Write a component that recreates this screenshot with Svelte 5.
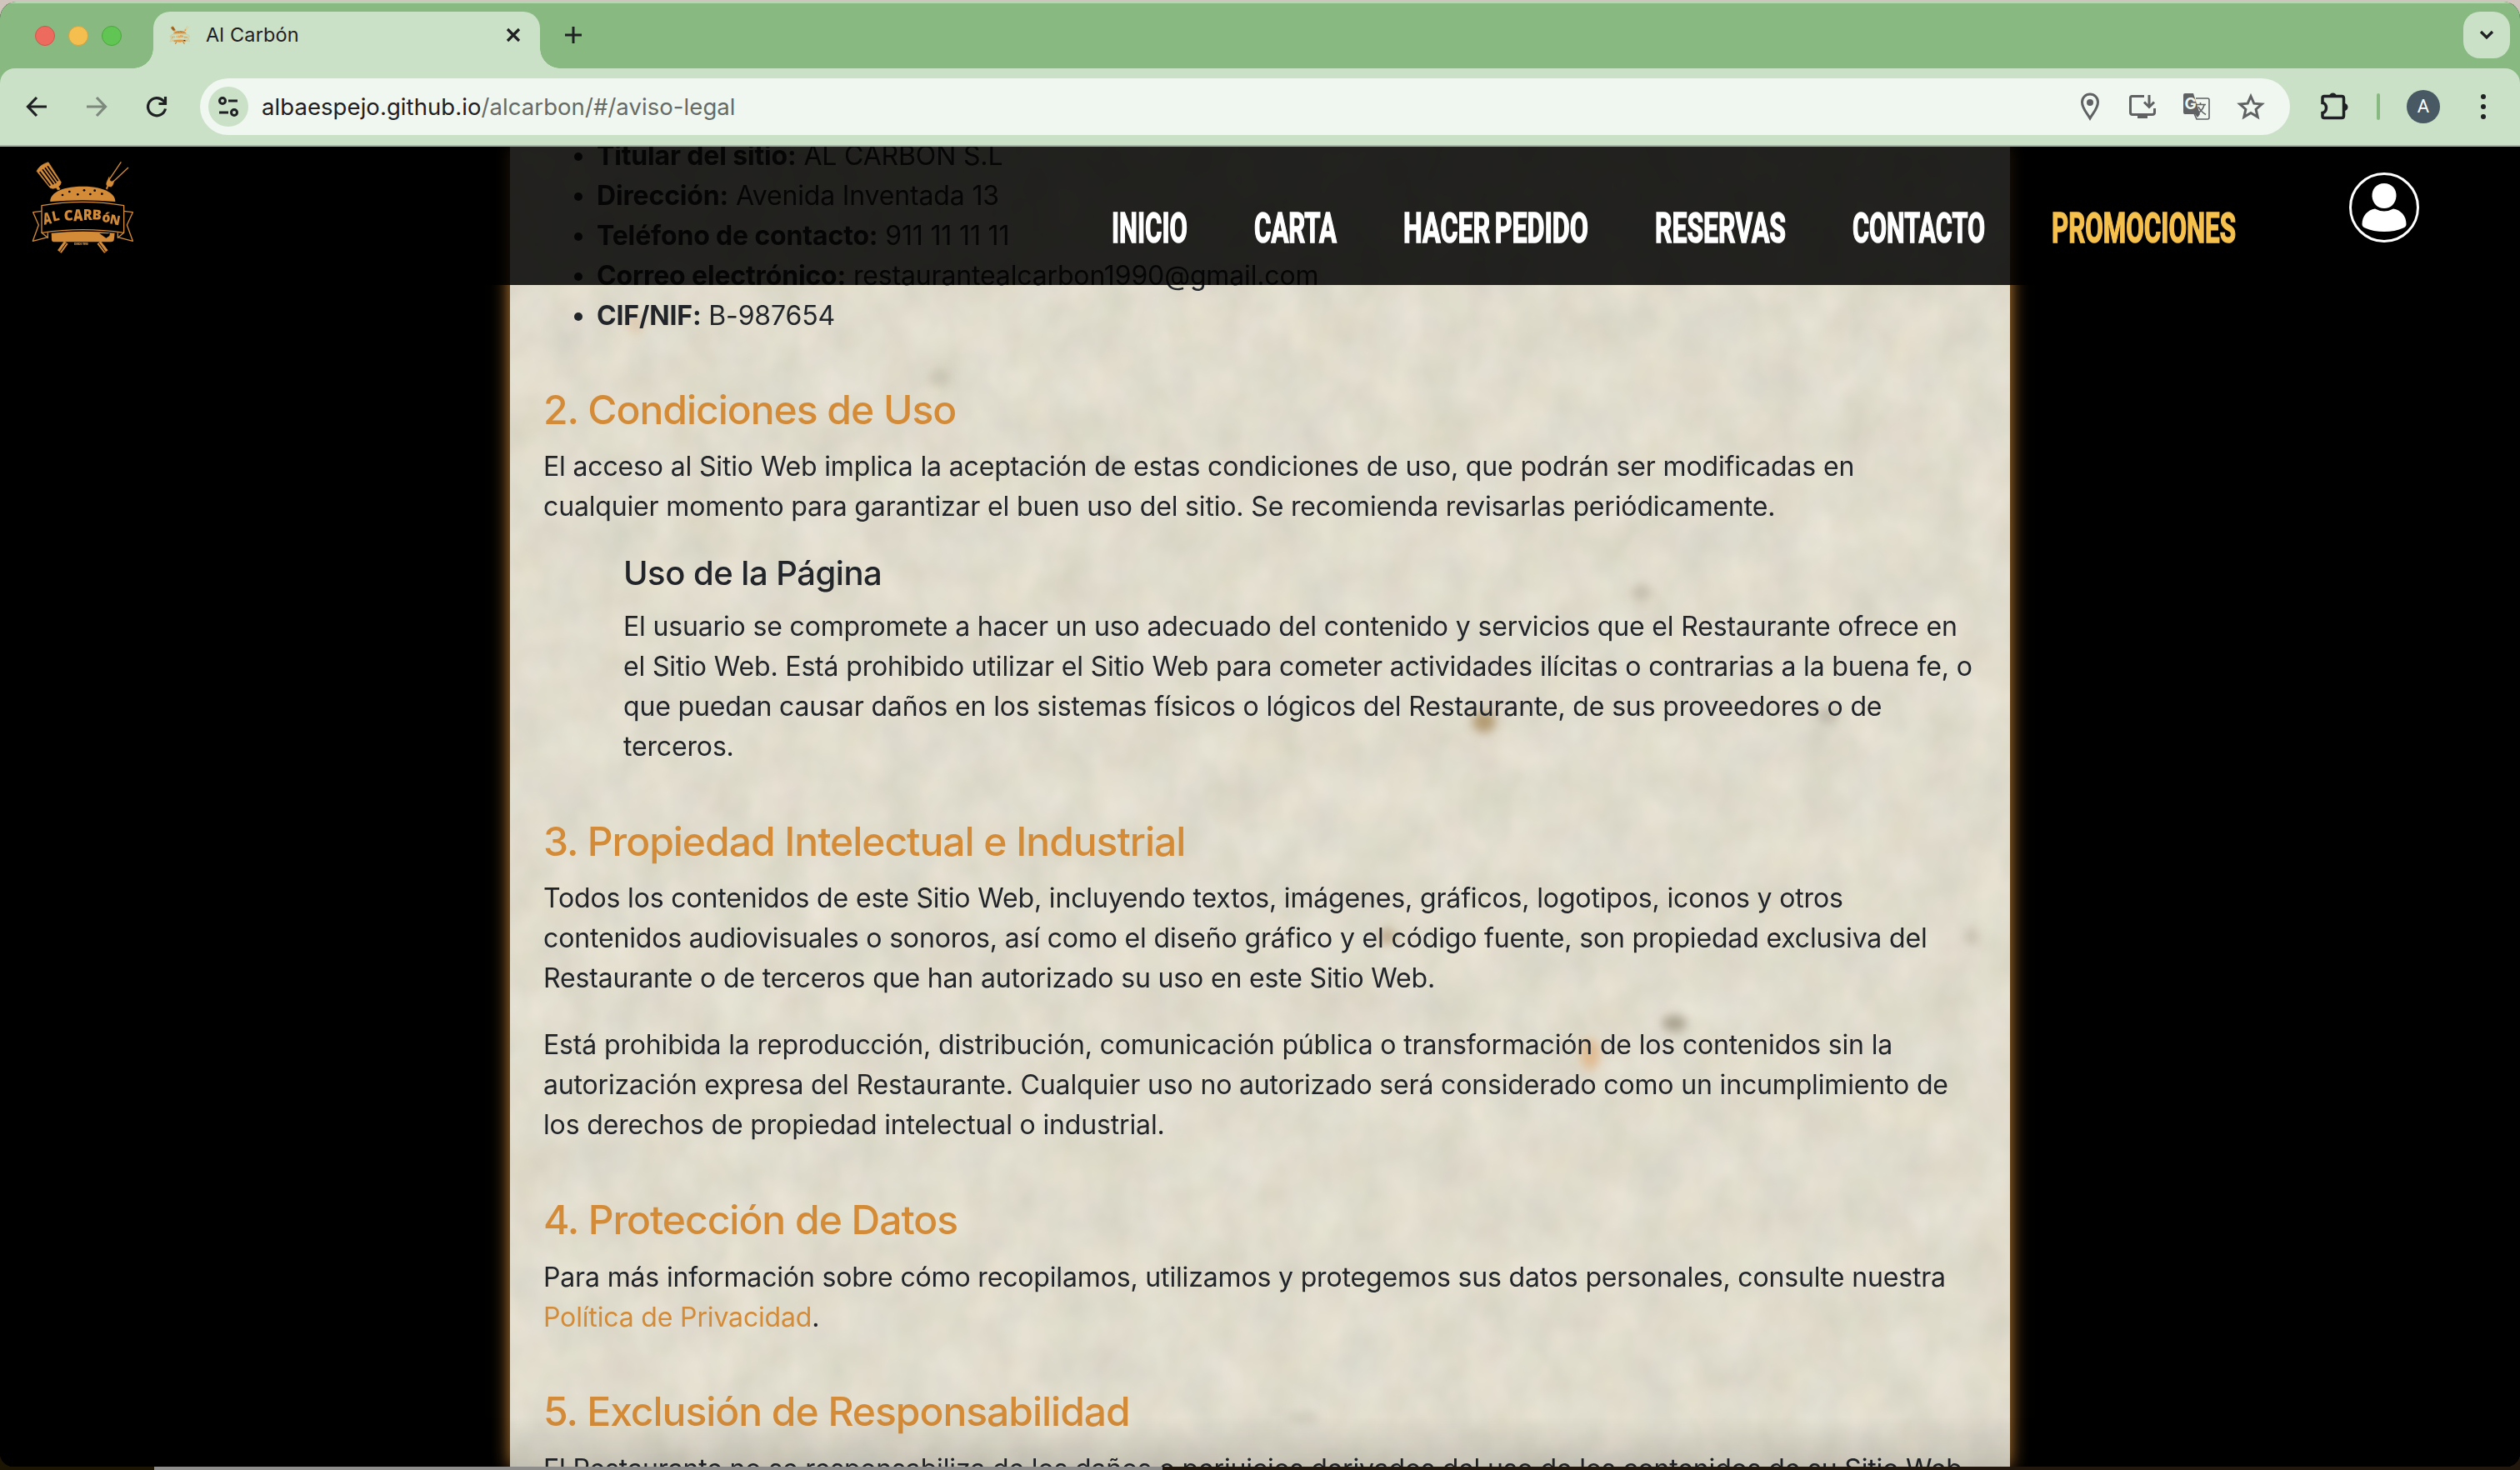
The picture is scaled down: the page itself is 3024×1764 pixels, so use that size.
<script>
  const nav = [
    { label: 'INICIO', w: 91 },
    { label: 'CARTA', w: 99 },
    { label: 'HACER PEDIDO', w: 222 },
    { label: 'RESERVAS', w: 157 },
    { label: 'CONTACTO', w: 159 },
    { label: 'PROMOCIONES', w: 221, accent: true }
  ];
  const owner = [
    ['Titular del sitio:', 'AL CARBÓN S.L'],
    ['Dirección:', 'Avenida Inventada 13'],
    ['Teléfono de contacto:', '911 11 11 11'],
    ['Correo electrónico:', 'restaurantealcarbon1990@gmail.com'],
    ['CIF/NIF:', 'B-987654']
  ];
</script>

{#snippet logo()}
  <svg class="logo" viewBox="0 0 480 390">
    <g fill="#d38b38" stroke="#d38b38" stroke-linejoin="round">
      <path d="M72 64 Q84 40 114 32 L160 104 Q158 116 150 119 L156 129 L148 132 L142 124 Q130 130 120 124 Z" stroke-width="2" />
      <path d="M83 66 L121 116 M93 58 L133 112 M102 52 L142 107 M111 46 L149 100" stroke="#000" stroke-width="5" />
      <path d="M376 31 L331 98 L342 107 L402 51" fill="none" stroke-width="4" />
      <path d="M333 84 Q334 108 350 98 Q350 114 340 121 L330 119 L326 130 L321 127 L326 117 Q320 112 325 101 Z" stroke-width="1" />
      <path d="M121 174 C119 149 151 119 239 119 C323 119 358 150 355 174 Q238 164 121 174 Z" stroke="none" />
      <g fill="#000" stroke="none">
        <circle cx="165" cy="150" r="4" /><circle cx="190" cy="138" r="4" /><circle cx="220" cy="148" r="4" /><circle cx="243" cy="133" r="4" />
        <circle cx="265" cy="147" r="4" /><circle cx="281" cy="134" r="4" /><circle cx="307" cy="146" r="4" />
      </g>
      <g fill="none" stroke-width="4">
        <path d="M90 188 Q239 162 386 188 V286 Q239 264 90 286 Z" />
        <path d="M90 208 L59 212 L79 258 L58 316 L112 302 M386 208 L418 212 L397 258 L418 316 L364 302" />
        <path d="M90 286 L112 304 V286 M386 286 L364 304 V286" />
      </g>
      <path d="M125 287 Q240 275 353 287 L350 313 Q348 319 340 319 H136 Q127 319 126 312 Z" stroke="none" />
      <path d="M298 288 L328 289 L336 287 L334 297 L322 305 Z" fill="#000" stroke="none" />
      <path d="M178 321 L154 354 M296 321 L322 354" fill="none" stroke-width="17" stroke-linejoin="miter" />
      <path d="M178 324 L156 354 M297 324 L319 354" fill="none" stroke="#000" stroke-width="3" />
    </g>
    <g class="brush">
      <text transform="translate(99 257) rotate(-10)" font-size="58" textLength="29" lengthAdjust="spacingAndGlyphs">A</text>
      <text transform="translate(131 245) rotate(-12)" font-size="50" textLength="26" lengthAdjust="spacingAndGlyphs">L</text>
      <text transform="translate(171 242) rotate(-3)" font-size="51" textLength="33" lengthAdjust="spacingAndGlyphs">C</text>
      <text transform="translate(205 244) rotate(-2)" font-size="58" textLength="34" lengthAdjust="spacingAndGlyphs">A</text>
      <text transform="translate(239 241)" font-size="52" textLength="33" lengthAdjust="spacingAndGlyphs">R</text>
      <text transform="translate(271 238) rotate(3)" font-size="50" textLength="34" lengthAdjust="spacingAndGlyphs">B</text>
      <text transform="translate(306 246) rotate(6)" font-size="48" textLength="30" lengthAdjust="spacingAndGlyphs">ó</text>
      <text transform="translate(333 252) rotate(11)" font-size="47" textLength="37" lengthAdjust="spacingAndGlyphs">N</text>
      <text x="207" y="330" font-size="10" textLength="50">DESDE 1990</text>
    </g>
  </svg>
{/snippet}

<div class="window">
  <header class="chrome">
    <div class="tabstrip">
      <div class="lights"><i class="red"></i><i class="yellow"></i><i class="green"></i></div>
      <div class="tab">
        <span class="favicon">{@render logo()}</span>
        <span class="tab-title">Al Carbón</span>
        <svg class="close" width="20" height="20" viewBox="0 0 20 20"><path d="M3 3 17 17M17 3 3 17" /></svg>
      </div>
      <svg class="plus" width="22" height="22" viewBox="0 0 22 22"><path d="M11 1V21M1 11H21" /></svg>
      <span class="drop"><svg width="20" height="14" viewBox="0 0 20 14"><path d="M3 3 10 10 17 3" /></svg></span>
    </div>
    <div class="toolbar">
      <div class="moves">
        <svg width="28" height="28" viewBox="0 0 28 28"><path d="M26 14H4M14 3 3.500 14 14 25" /></svg>
        <svg class="off" width="28" height="28" viewBox="0 0 28 28"><path d="M2 14H24M14 3 24.500 14 14 25" /></svg>
        <svg width="28" height="28" viewBox="0 0 28 28"><path d="M24.500 16.500A10.600 10.600 0 1 1 22 7L25 10M24.500 2V10.500H16.500" /></svg>
      </div>
      <div class="omnibox">
        <span class="site">
          <svg width="28" height="28" viewBox="0 0 28 28"><circle cx="7" cy="7" r="3.500" /><path d="M14 7H25M3 21H14" /><circle cx="21" cy="21" r="3.500" /></svg>
        </span>
        <span class="url">albaespejo.github.io<em>/alcarbon/#/aviso-legal</em></span>
        <div class="actions">
          <svg width="32" height="36" viewBox="0 0 32 36"><path d="M16 32C12 25 6.500 20 6.500 12.500a9.500 9.500 0 0 1 19 0C25.500 20 20 25 16 32Z" fill="none" stroke-width="3" /><circle cx="16" cy="13" r="4" stroke="none" /></svg>
          <svg width="36" height="36" viewBox="0 0 36 36"><path d="M20 5.500H5.500Q3.500 5.500 3.500 7.500V25Q3.500 27.500 6 27.500H29.500Q32.500 27.500 32.500 25V20" fill="none" stroke-width="3" /><path d="M12 28H24V32H12Z" stroke="none" /><path d="M26 4V17M20 12.500 26 18.500 32 12.500" fill="none" stroke-width="3" /></svg>
          <svg width="36" height="36" viewBox="0 0 36 36"><path d="M17 8H31Q33 8 33 10V31Q33 33 31 33H18L14 24" fill="none" stroke-width="1.600" /><path d="M4 2H14L22 27L19 31L16 27H4Q2 27 2 25V4Q2 2 4 2Z" stroke="none" /><text x="3.500" y="20.500" class="gee">G</text><path d="M17 15.500H29M22.500 13V15.500M27 16Q25 23 18 27M20 18Q23 24 29 27.500" fill="none" stroke-width="1.600" /></svg>
          <svg width="36" height="36" viewBox="0 0 36 36"><path d="M18 5.500 21.800 14.200 31.200 15 24.100 21.200 26.200 30.400 18 25.500 9.800 30.400 11.900 21.200 4.800 15 14.200 14.200Z" fill="none" stroke-width="3" stroke-linejoin="miter" /></svg>
        </div>
      </div>
      <svg class="ext" width="40" height="40" viewBox="0 0 40 40"><path d="M6 9.500Q6 7.500 8 7.500H29Q31.500 7.500 31.500 10V31Q31.500 33.500 29 33.500H8Q6 33.500 6 31.500V27.500C12 26.500 12 16 6 15.500Z" fill="none" stroke-width="3.500" /><path d="M14 8a4.500 4.500 0 0 1 9 0ZM32 16a4.500 4.500 0 0 1 0 9Z" stroke="none" /></svg>
      <i class="sep"></i>
      <span class="avatar">A</span>
      <span class="dots"><i></i><i></i><i></i></span>
    </div>
  </header>

  <main class="view">
    <header class="site-header">
      <div class="brand">{@render logo()}</div>
      <nav>
        {#each nav as item}
          <svg class:accent={item.accent} width={item.w} height="60" viewBox={`0 0 ${item.w} 60`}>
            <text x="0" y="45.500" textLength={item.w} lengthAdjust="spacingAndGlyphs">{item.label}</text>
          </svg>
        {/each}
      </nav>
      <svg class="user" width="84" height="84" viewBox="0 0 84 84">
        <circle cx="42" cy="42" r="40.500" fill="none" stroke="#fff" stroke-width="3" />
        <path d="M42 13C51 13 57 20 56.500 28.500C56 37 50 43 42 43S28 37 27.500 28.500C27 20 33 13 42 13Z" />
        <path d="M31 43.500Q42 49.500 53 43.500C62 45 68.500 52 68.500 62Q68.500 65 65 66.500Q55 71 42 71T19 66.500Q15.500 65 15.500 62C15.500 52 22 45 31 43.500Z" />
      </svg>
    </header>

    <article class="paper">
      <svg class="grain" width="1800" height="1584">
        <filter id="fibre" x="0" y="0" width="100%" height="100%" color-interpolation-filters="sRGB">
          <feTurbulence type="fractalNoise" baseFrequency="0.02 0.016" numOctaves="3" seed="8" />
          <feColorMatrix values="0.08 0.035 0 0 0.82  0.08 0 0 0 0.821  0.08 0 0.035 0 0.745  0 0 0 0 1" />
        </filter>
        <filter id="soft" x="-100%" y="-100%" width="300%" height="300%"><feGaussianBlur stdDeviation="6" /></filter>
        <rect width="1800" height="1584" filter="url(#fibre)" />
        <g filter="url(#soft)">
          <ellipse cx="1169" cy="690" rx="14" ry="13" fill="#a88c5c" opacity=".8" />
          <ellipse cx="1397" cy="1052" rx="15" ry="10" fill="#8d8470" opacity=".65" />
          <ellipse cx="1296" cy="1089" rx="12" ry="19" fill="#ddab78" opacity=".7" />
          <ellipse cx="1053" cy="948" rx="10" ry="10" fill="#a98d68" opacity=".65" />
          <ellipse cx="1581" cy="683" rx="12" ry="10" fill="#9d9682" opacity=".45" />
          <ellipse cx="515" cy="277" rx="14" ry="11" fill="#a49e8c" opacity=".35" />
          <ellipse cx="720" cy="382" rx="12" ry="12" fill="#a49e8c" opacity=".3" />
          <ellipse cx="1358" cy="535" rx="12" ry="10" fill="#a49e8c" opacity=".45" />
          <ellipse cx="1754" cy="948" rx="10" ry="10" fill="#a49e8c" opacity=".4" />
          <ellipse cx="950" cy="1525" rx="20" ry="8" fill="#a49e8c" opacity=".3" />
          <ellipse cx="150" cy="212" rx="10" ry="13" fill="#dcb48a" opacity=".4" />
        </g>
      </svg>
      <div class="copy">
        <ul>
          {#each owner as [name, value]}
            <li><b>{name}</b> {value}</li>
          {/each}
        </ul>

        <h3>2. Condiciones de Uso</h3>
        <p>El acceso al Sitio Web implica la aceptación de estas condiciones de uso, que podrán ser modificadas en<br />cualquier momento para garantizar el buen uso del sitio. Se recomienda revisarlas periódicamente.</p>
        <section>
          <h4>Uso de la Página</h4>
          <p>El usuario se compromete a hacer un uso adecuado del contenido y servicios que el Restaurante ofrece en<br />el Sitio Web. Está prohibido utilizar el Sitio Web para cometer actividades ilícitas o contrarias a la buena fe, o<br />que puedan causar daños en los sistemas físicos o lógicos del Restaurante, de sus proveedores o de<br />terceros.</p>
        </section>

        <h3>3. Propiedad Intelectual e Industrial</h3>
        <p>Todos los contenidos de este Sitio Web, incluyendo textos, imágenes, gráficos, logotipos, iconos y otros<br />contenidos audiovisuales o sonoros, así como el diseño gráfico y el código fuente, son propiedad exclusiva del<br />Restaurante o de terceros que han autorizado su uso en este Sitio Web.</p>
        <p>Está prohibida la reproducción, distribución, comunicación pública o transformación de los contenidos sin la<br />autorización expresa del Restaurante. Cualquier uso no autorizado será considerado como un incumplimiento de<br />los derechos de propiedad intelectual o industrial.</p>

        <h3>4. Protección de Datos</h3>
        <p>Para más información sobre cómo recopilamos, utilizamos y protegemos sus datos personales, consulte nuestra<br /><span class="link">Política de Privacidad</span>.</p>

        <h3>5. Exclusión de Responsabilidad</h3>
        <p>El Restaurante no se responsabiliza de los daños o perjuicios derivados del uso de los contenidos de su Sitio Web</p>
      </div>
    </article>
    <div class="shade"></div>
  </main>
</div>

<style>
  :global(body) {
    margin: 0;
    overflow: hidden;
    background: linear-gradient(90deg, #1d1503 185px, #8f8d8b 185px 1395px, #22170c 1395px) 0 1740px / 100% 24px no-repeat, #cfc5bc;
  }
  .window {
    width: 3024px;
    height: 1758px;
    margin-top: 2px;
    box-sizing: border-box;
    display: flex;
    flex-direction: column;
    overflow: hidden;
    border-radius: 20px 20px 16px 16px;
    font-family: Inter, sans-serif;
    background: #000;
  }
  .chrome {
    background: #88b981;
    border-top: 2px solid #b5d4b1;
    flex: none;
  }
  .tabstrip {
    height: 78px;
    display: flex;
    align-items: flex-end;
  }
  .lights {
    display: flex;
    gap: 16px;
    margin: 0 38px 27px 42px;
  }
  .lights i {
    width: 24px;
    height: 24px;
    box-sizing: border-box;
    border-radius: 50%;
    border: 1px solid #d05549;
    background: #ed6a5e;
  }
  .lights .yellow { background: #f5bf4f; border-color: #d6a243; }
  .lights .green { background: #61c554; border-color: #4aa73c; }
  .tab {
    position: relative;
    width: 464px;
    height: 68px;
    box-sizing: border-box;
    padding: 0 22px 12px 20px;
    display: flex;
    align-items: center;
    border-radius: 20px 20px 0 0;
    background: #cae1c7;
  }
  .tab::before,
  .tab::after {
    content: '';
    position: absolute;
    bottom: 0;
    width: 24px;
    height: 24px;
  }
  .tab::before { left: -24px; background: radial-gradient(circle at 0 0, transparent 23.500px, #cae1c7 24px); }
  .tab::after { right: -24px; background: radial-gradient(circle at 100% 0, transparent 23.500px, #cae1c7 24px); }
  .favicon {
    display: flex;
    width: 30px;
    height: 26px;
    margin: 0 17px 0 -4px;
    filter: brightness(1.08);
  }
  .favicon .logo { width: 32px; height: 26px; }
  .tab-title {
    flex: 1;
    font-size: 23.500px;
    letter-spacing: .15px;
    color: #1f2023;
    line-height: 30px;
  }
  .close path, .plus path, .drop path {
    fill: none;
    stroke: #1f2023;
    stroke-width: 3.200px;
  }
  .plus path { stroke-width: 3px; }
  .plus { margin: 0 0 29px 29px; }
  .drop {
    width: 56px;
    height: 56px;
    margin: 0 12px 12px auto;
    border-radius: 20px;
    background: #cae1c7;
    display: grid;
    place-items: center;
  }
  .toolbar {
    height: 92px;
    border-bottom: 2px solid #a3b5a1;
    border-radius: 18px 18px 0 0;
    background: #cae1c7;
    display: flex;
    align-items: center;
  }
  .moves {
    display: flex;
    gap: 44px;
    margin: 0 38px 0 30px;
  }
  .moves path {
    fill: none;
    stroke: #1f2023;
    stroke-width: 3.200px;
  }
  .moves .off { opacity: .45; }
  .omnibox {
    width: 2508px;
    height: 68px;
    box-sizing: border-box;
    padding: 0 29px 0 10px;
    display: flex;
    align-items: center;
    border-radius: 34px;
    background: #f0f7f0;
  }
  .site {
    width: 48px;
    height: 48px;
    border-radius: 50%;
    background: #cae1c7;
    display: grid;
    place-items: center;
  }
  .site svg { fill: none; stroke: #1f2023; stroke-width: 3px; }
  .url {
    flex: 1;
    margin-left: 16px;
    font-size: 27.500px;
    letter-spacing: .07px;
    color: #1f2023;
  }
  .url em { font-style: normal; color: #666b67; }
  .actions {
    display: flex;
    align-items: center;
    gap: 29px;
    fill: #5f6163;
    stroke: #5f6163;
  }
  .gee {
    font-size: 19px;
    font-weight: 700;
    fill: #f0f7f0;
    stroke: none;
  }
  .ext { margin-left: 33px; fill: #1f2023; stroke: #1f2023; }
  .ext path:last-child { stroke: none; }
  .sep {
    width: 4px;
    height: 32px;
    border-radius: 2px;
    margin: 0 32px 0 31px;
    background: #88b981;
  }
  .avatar {
    width: 40px;
    height: 40px;
    border-radius: 50%;
    background: #485963;
    color: #fff;
    display: grid;
    place-items: center;
    font: 22px/40px Roboto, sans-serif;
  }
  .dots {
    display: grid;
    gap: 6px;
    margin-left: 49px;
  }
  .dots i {
    width: 6px;
    height: 6px;
    border-radius: 50%;
    background: #1f2023;
  }
  .view {
    position: relative;
    flex: 1;
    min-height: 0;
    overflow: hidden;
    background: #000;
  }
  .site-header {
    position: absolute;
    z-index: 2;
    inset: 0 0 auto 0;
    height: 166px;
    display: flex;
    align-items: flex-start;
    background: rgba(0, 0, 0, .85);
  }
  .brand {
    width: 160px;
    height: 130px;
    margin: 8px 0 0 20px;
  }
  .logo { width: 100%; height: 100%; display: block; flex: none; }
  .brush {
    font-family: "Open Sans", sans-serif;
    font-weight: 800;
    fill: #d38b38;
  }
  nav {
    display: flex;
    gap: 80px;
    margin: 69px 0 0 1154px;
  }
  nav svg { overflow: visible; fill: #fff; stroke: #fff; stroke-width: 1.600px; display: block; }
  nav text {
    font-family: Roboto, sans-serif;
    font-size: 50.500px;
    font-weight: 700;
    word-spacing: -4px;
  }
  nav .accent { fill: #f5c04c; stroke: #f5c04c; }
  .user { fill: #fff; margin: 31px 0 0 136px; }
  .paper {
    position: relative;
    width: 1800px;
    height: 100%;
    margin-left: 612px;
    background: #dfdacb;
    box-shadow: 0 0 20px #d38b38;
  }
  .grain {
    position: absolute;
    inset: 0;
  }
  .copy {
    position: relative;
    box-sizing: border-box;
    padding: 0 40px;
    color: #212529;
    font-size: 32px;
    line-height: 48px;
    letter-spacing: -.155px;
    white-space: nowrap;
  }
  ul {
    margin: 0;
    padding: 0 0 0 64px;
    transform: translateY(-13px);
    height: 226px;
  }
  h3 {
    margin: 56px 0 16px;
    padding-top: 4.600px;
    font-size: 48px;
    font-weight: 500;
    line-height: 57.600px;
    letter-spacing: -1.030px;
    color: #d38b38;
  }
  h4 {
    margin: 0 0 16px;
    font-size: 40px;
    font-weight: 500;
    line-height: 48px;
    letter-spacing: -.5px;
  }
  p { margin: 0 0 32px; }
  section { padding-left: 96px; }
  .link { color: #d38b38; }
  .shade {
    position: absolute;
    inset: auto 0 0 0;
    height: 60px;
    background: linear-gradient(transparent, rgba(0, 0, 0, .12));
  }
</style>
